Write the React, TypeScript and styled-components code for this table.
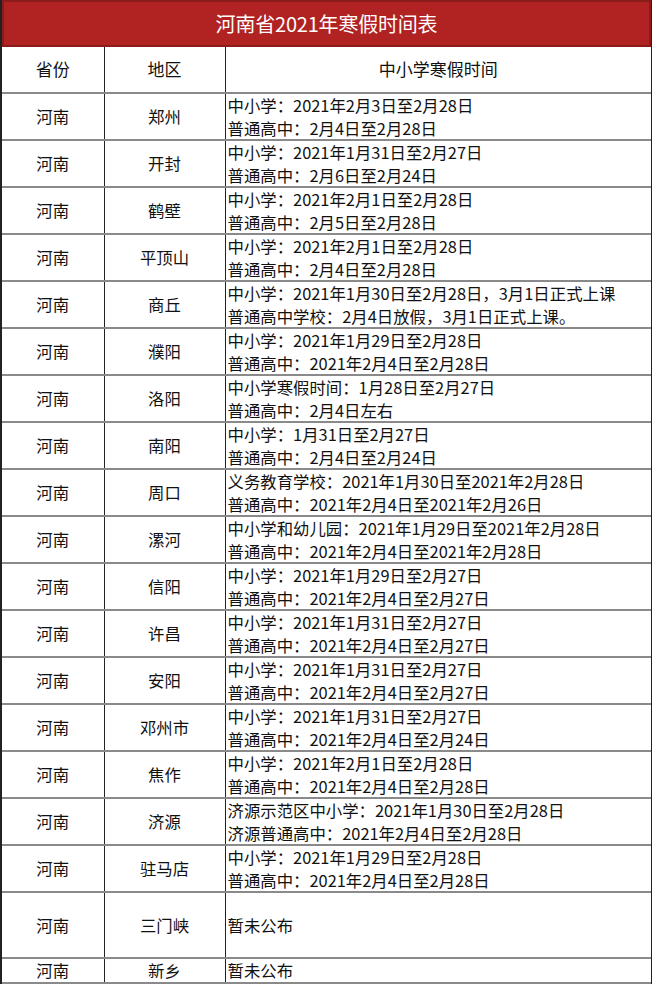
import React from 'react'
import styled, { createGlobalStyle } from 'styled-components'

const GlobalStyle = createGlobalStyle`
  html, body {
    margin: 0;
    padding: 0;
    background: #fff;
  }
  body {
    font-family: "PingFang SC", "Noto Sans CJK SC", "Noto Sans", sans-serif;
    color: #111;
  }
`

const rows: [string, string[]][] = [
  ['郑州', ['中小学：2021年2月3日至2月28日', '普通高中：2月4日至2月28日']],
  ['开封', ['中小学：2021年1月31日至2月27日', '普通高中：2月6日至2月24日']],
  ['鹤壁', ['中小学：2021年2月1日至2月28日', '普通高中：2月5日至2月28日']],
  ['平顶山', ['中小学：2021年2月1日至2月28日', '普通高中：2月4日至2月28日']],
  ['商丘', ['中小学：2021年1月30日至2月28日，3月1日正式上课', '普通高中学校：2月4日放假，3月1日正式上课。']],
  ['濮阳', ['中小学：2021年1月29日至2月28日', '普通高中：2021年2月4日至2月28日']],
  ['洛阳', ['中小学寒假时间：1月28日至2月27日', '普通高中：2月4日左右']],
  ['南阳', ['中小学：1月31日至2月27日', '普通高中：2月4日至2月24日']],
  ['周口', ['义务教育学校：2021年1月30日至2021年2月28日', '普通高中：2021年2月4日至2021年2月26日']],
  ['漯河', ['中小学和幼儿园：2021年1月29日至2021年2月28日', '普通高中：2021年2月4日至2021年2月28日']],
  ['信阳', ['中小学：2021年1月29日至2月27日', '普通高中：2021年2月4日至2月27日']],
  ['许昌', ['中小学：2021年1月31日至2月27日', '普通高中：2021年2月4日至2月27日']],
  ['安阳', ['中小学：2021年1月31日至2月27日', '普通高中：2021年2月4日至2月27日']],
  ['邓州市', ['中小学：2021年1月31日至2月27日', '普通高中：2021年2月4日至2月24日']],
  ['焦作', ['中小学：2021年2月1日至2月28日', '普通高中：2021年2月4日至2月28日']],
  ['济源', ['济源示范区中小学：2021年1月30日至2月28日', '济源普通高中：2021年2月4日至2月28日']],
  ['驻马店', ['中小学：2021年1月29日至2月28日', '普通高中：2021年2月4日至2月28日']],
]

const Sheet = styled.div`
  width: 652px;
  border-left: 2px solid #222;
  border-right: 1px solid #222;
  box-sizing: border-box;
`

const Title = styled.div`
  height: 47px;
  background: #b12222;
  box-shadow: inset 0 0 0 2px #8a1c1c;
  color: #fff;
  font-size: 20px;
  display: flex;
  align-items: center;
  justify-content: center;
  letter-spacing: -0.2px;
`

const Table = styled.table`
  width: 100%;
  border-collapse: collapse;
  table-layout: fixed;
`

const Row = styled.tr<{ $h: number }>`
  height: ${p => p.$h}px;
`

const Cell = styled.td<{ $align?: 'left' | 'center' }>`
  padding: 0 0 0 ${p => (p.$align === 'left' ? '2px' : '0')};
  text-align: ${p => p.$align ?? 'center'};
  vertical-align: middle;
  font-size: 16.4px;
  line-height: 22.5px;
  border-right: 1px solid #222;
  border-bottom: 2px solid #8a8a8a;
  white-space: nowrap;
  &:last-child {
    border-right: none;
  }
`

const HeadCell = styled(Cell)`
  font-size: 17px;
`

export default function App() {
  return (
    <>
      <GlobalStyle />
      <Sheet>
        <Title>河南省2021年寒假时间表</Title>
        <Table>
          <colgroup>
            <col style={{ width: 102 }} />
            <col style={{ width: 121 }} />
            <col />
          </colgroup>
          <tbody>
            <Row $h={46}>
              <HeadCell>省份</HeadCell>
              <HeadCell>地区</HeadCell>
              <HeadCell>中小学寒假时间</HeadCell>
            </Row>
            {rows.map(([city, lines]) => (
              <Row key={city} $h={45}>
                <Cell>河南</Cell>
                <Cell>{city}</Cell>
                <Cell $align="left">
                  {lines[0]}
                  <br />
                  {lines[1]}
                </Cell>
              </Row>
            ))}
            <Row $h={66}>
              <Cell>河南</Cell>
              <Cell>三门峡</Cell>
              <Cell $align="left">暂未公布</Cell>
            </Row>
            <Row $h={24}>
              <Cell>河南</Cell>
              <Cell>新乡</Cell>
              <Cell $align="left">暂未公布</Cell>
            </Row>
          </tbody>
        </Table>
      </Sheet>
    </>
  )
}
